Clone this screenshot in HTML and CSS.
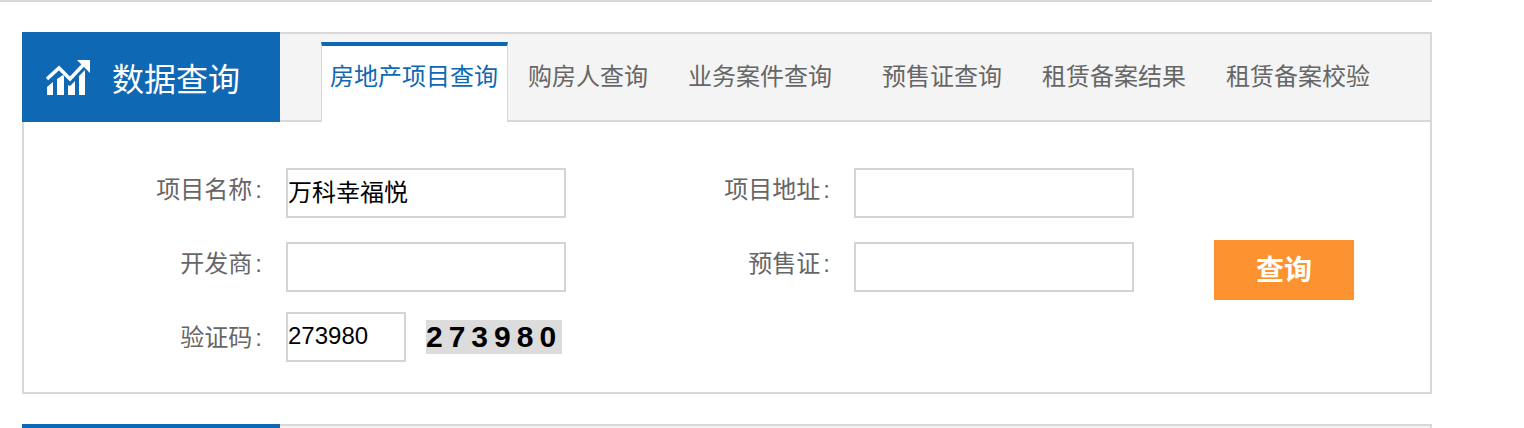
FILE: index.html
```html
<!DOCTYPE html>
<html lang="zh-CN">
<head>
  <meta charset="UTF-8" />
  <title>数据查询</title>
  <link rel="stylesheet" href="styles.css">
</head>
<body>
  <div id="page">
    <div class="panel">
      <div class="panel-head">
        <h2 class="panel-title">
          <svg class="title-icon" viewBox="0 0 46 38" width="46" height="38">
            <path d="M1 36v-8l6-5v13zM11 36V20l6-4 1 1v19zM22 36V26l2 1 5-5v14zM33 36V17l6-6v25z" fill="#fff"/>
            <path d="M1 20 13 9l11 11L39 4" fill="none" stroke="#fff" stroke-width="3.5"/>
            <path d="M31 1h13v13z" fill="#fff"/>
          </svg>
          数据查询
        </h2>
        <ul class="tabs">
          <li class="tab active">房地产项目查询</li>
          <li class="tab">购房人查询</li>
          <li class="tab wide">业务案件查询</li>
          <li class="tab">预售证查询</li>
          <li class="tab">租赁备案结果</li>
          <li class="tab">租赁备案校验</li>
        </ul>
      </div>

      <form class="search-form">
        <label class="field-label">项目名称<span class="colon">:</span></label>
        <input class="field" type="text" value="万科幸福悦" />
        <label class="field-label">项目地址<span class="colon">:</span></label>
        <input class="field" type="text" />

        <label class="field-label new-row">开发商<span class="colon">:</span></label>
        <input class="field" type="text" />
        <label class="field-label">预售证<span class="colon">:</span></label>
        <input class="field" type="text" />
        <button class="search-btn" type="button">查询</button>

        <label class="field-label new-row">验证码<span class="colon">:</span></label>
        <div class="captcha-row">
          <input class="field code" type="text" value="273980" />
          <span class="captcha">273980</span>
        </div>
      </form>
    </div>

    <div class="panel next">
      <div class="panel-head">
        <h2 class="panel-title"></h2>
      </div>
    </div>
  </div>
</body>
</html>
```

FILE: styles.css
```css
html, body {
  height: 428px;
  overflow: hidden;
}
body {
  margin: 0;
  background: #fff;
  font-family: "Liberation Sans", "Noto Sans CJK SC", sans-serif;
}
#page {
  width: 1410px;
  height: 396px;
  padding-left: 22px;
  box-shadow: 0 2px 0 #d8d8d8 inset;
  padding-top: 32px;
}
.panel {
  border: 2px solid #d8d8d8;
  border-top: 0;
  height: 362px;
  box-sizing: border-box;
}
.panel-head {
  display: flex;
  height: 90px;
  margin: 0 -2px 0 -2px;
  background: #f4f4f4;
  box-sizing: border-box;
  border-top: 2px solid #d8d8d8;
  border-bottom: 2px solid #d8d8d8;
  border-right: 2px solid #d8d8d8;
}
.panel-title {
  display: flex;
  align-items: center;
  gap: 20px;
  width: 258px;
  height: 90px;
  margin: -2px 0 0 0;
  padding-left: 24px;
  box-sizing: border-box;
  background: #0f68b4;
  color: #fff;
  font-size: 32px;
  font-weight: normal;
}
.title-icon {
  margin-top: 2px;
  filter: blur(0.6px);
}
.tabs {
  display: flex;
  list-style: none;
  margin: 8px 0 0 41px;
  padding: 0;
  height: 80px;
}
.tab {
  padding: 14px 20px 0;
  height: 80px;
  box-sizing: border-box;
  font-size: 24px;
  line-height: 42px;
  color: #666;
  white-space: nowrap;
}
.tab.wide {
  padding-right: 30px;
}
.tab.active {
  padding: 10px 9px 0 8px;
  height: 80px;
  background: #fff;
  color: #0f68b4;
  border-top: 4px solid #0f68b4;
  border-left: 1px solid #d8d8d8;
  border-right: 1px solid #d8d8d8;
}
.search-form {
  display: grid;
  grid-template-columns: 262px 280px 288px 280px 80px 140px;
  grid-template-rows: 50px 50px 50px;
  row-gap: 24px;
  padding-top: 46px;
  align-items: center;
}
.new-row {
  grid-column: 1;
}
.field-label {
  margin-right: 24px;
  padding-bottom: 12px;
  text-align: right;
  font-size: 24px;
  color: #666;
}
.colon {
  margin-left: 3px;
}
.field {
  box-sizing: border-box;
  width: 280px;
  height: 50px;
  padding: 0 0 6px;
  border: 2px solid #d4d4d4;
  background: #fff;
  font-family: inherit;
  font-size: 24px;
  color: #000;
  outline: none;
}
.captcha-row {
  display: flex;
  align-items: center;
  gap: 20px;
  margin-top: -8px;
  grid-column: 2 / span 3;
}
.captcha-row .field {
  width: 120px;
  padding-bottom: 2px;
}
.captcha {
  width: 136px;
  height: 34px;
  overflow: hidden;
  background: #dcdcdc;
  color: #000;
  font-size: 30px;
  font-weight: bold;
  letter-spacing: 6px;
  line-height: 34px;
  text-align: center;
  white-space: nowrap;
}
.search-btn {
  grid-column: 6;
  width: 140px;
  height: 60px;
  margin-top: 6px;
  padding: 0 0 4px;
  border: none;
  background: #fc9230;
  color: #fff;
  font-family: inherit;
  font-size: 28px;
  font-weight: bold;
  cursor: pointer;
}
.panel.next {
  margin-top: 30px;
  border: 0;
  height: 4px;
  overflow: hidden;
}
.panel.next .panel-head {
  margin: 0;
}
```
